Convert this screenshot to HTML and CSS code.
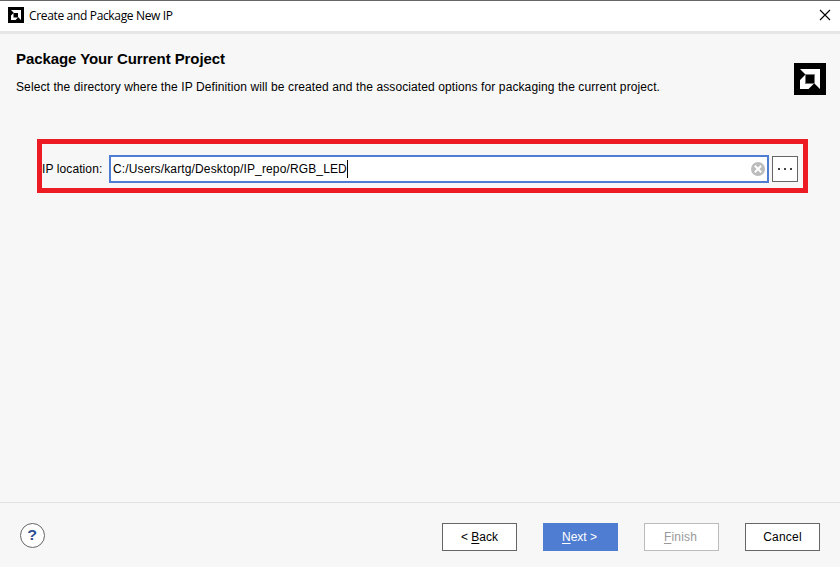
FILE: index.html
```html
<!DOCTYPE html>
<html lang="en">
<head>
<meta charset="utf-8">
<title>Create and Package New IP</title>
<link rel="stylesheet" href="styles.css">
</head>
<body>
<div class="dialog">
  <header class="titlebar">
    <svg class="app-icon" viewBox="0 0 32 32"><path d="M0 0h32v32H0z"/><path fill="#fff" d="M6 6h20v20l-6-6v-8h-8zM6 17l5-5v9h9l-5 5H6z"/></svg>
    <span class="window-title">Create and Package New IP</span>
    <svg class="close" viewBox="0 0 12 12"><path d="M1 1l10 10M11 1L1 11"/></svg>
  </header>
  <section class="intro">
    <div class="intro-text">
      <h1>Package Your Current Project</h1>
      <p>Select the directory where the IP Definition will be created and the associated options for packaging the current project.</p>
    </div>
    <svg class="brand" viewBox="0 0 32 32"><path d="M0 0h32v32H0z"/><path fill="#fff" d="M6 6h20v20l-5.500-5.500v-9h-9zM6 17l5-5v8.500h9l-5.500 5.500H6z"/><path fill="none" stroke="#777" d="M11.500 20.500v-9h9v9z"/></svg>
  </section>
  <main class="content">
    <div class="location">
      <label class="location-label">IP location:</label>
      <div class="field">
        <span class="path">C:/Users/kartg/Desktop/IP_repo/RGB_LED</span><span class="caret"></span>
        <svg class="clear" viewBox="0 0 14 14"><circle cx="7" cy="7" r="7"/><path d="M3.800 3.800l6.400 6.400M10.200 3.800l-6.400 6.400"/></svg>
      </div>
      <button class="browse"><i></i><i></i><i></i></button>
    </div>
  </main>
  <footer class="footer">
    <button class="help"><span>?</span></button>
    <div class="actions">
      <button class="btn">&lt; <u>B</u>ack</button>
      <button class="btn primary"><u>N</u>ext &gt;</button>
      <button class="btn disabled"><u>F</u>inish</button>
      <button class="btn cancel">Cancel</button>
    </div>
  </footer>
</div>
</body>
</html>
```
FILE: styles.css
```css
* { box-sizing: border-box; }
body { margin: 0; font: 12px/14px "Liberation Sans", Arial, sans-serif; color: #000; }
button { font: inherit; color: inherit; padding: 0; margin: 0; border-radius: 0; }
.dialog { width: 840px; height: 567px; background: #f7f7f7; display: flex; flex-direction: column; }
.titlebar { height: 34px; flex: none; display: flex; align-items: center; padding: 0 9px 2px 8px; background: #fff; border-top: 1px solid #666; border-bottom: 3px solid #e6e6e6; }
.app-icon { width: 16px; height: 16px; }
.window-title { margin-left: 5px; padding-top: 2px; font: 12px/16px "Open Sans", "Noto Sans", sans-serif; letter-spacing: -0.34px; white-space: nowrap; }
.close { width: 12px; height: 12px; margin-left: auto; fill: none; stroke: #000; stroke-width: 1.1; }
.intro { display: flex; justify-content: space-between; padding: 16px 14px 0 16px; }
.intro-text { white-space: nowrap; }
h1 { margin: 0; font-size: 15px; line-height: 18px; font-weight: bold; letter-spacing: -0.08px; }
p { margin: 12px 0 0; letter-spacing: 0.103px; }
.brand { width: 32px; height: 32px; margin-top: 13px; }
.content { flex: 1; padding: 44px 32px 0 37px; }
.location { height: 54px; display: flex; align-items: center; border: 5px solid #ed1c24; padding: 6px 5px 0 0; white-space: nowrap; }
.location-label { width: 67px; letter-spacing: 0.1px; }
.field { flex: 1; height: 28px; display: flex; align-items: center; background: #fff; border: 2px solid #4f7dd1; padding: 0 2px; }
.path { letter-spacing: 0.135px; }
.caret { width: 1px; height: 18px; background: #000; }
.clear { width: 14px; height: 14px; margin-left: auto; fill: #bcbcbc; }
.clear path { stroke: #fff; stroke-width: 2; }
.browse { width: 26px; height: 26px; margin-left: 3px; display: flex; align-items: center; justify-content: center; gap: 4px; background: #fff; border: 1px solid #666; }
.browse i { width: 2px; height: 2px; background: #444; }
.footer { height: 65px; flex: none; display: flex; justify-content: space-between; align-items: flex-start; border-top: 1px solid #e3e3e3; padding: 20px 20px 0; }
.help { width: 25px; height: 25px; border: 1px solid #666; border-radius: 50%; background: #fff; color: #2f4f93; font-size: 14px; font-weight: bold; line-height: 23px; }
.help span { display: inline-block; transform: scaleX(1.15); }
.actions { display: flex; gap: 26px; }
.btn { width: 75px; height: 28px; background: #fff; border: 1px solid #666; white-space: nowrap; }
.primary { background: #4f7dd1; border-color: #4f7dd1; color: #fff; padding-right: 2px; }
.disabled { border-color: #bcbcbc; color: #999; padding-right: 2px; letter-spacing: 0.2px; }
.cancel { letter-spacing: 0.2px; }
u { text-underline-offset: 2px; text-decoration-thickness: 1px; }
```
